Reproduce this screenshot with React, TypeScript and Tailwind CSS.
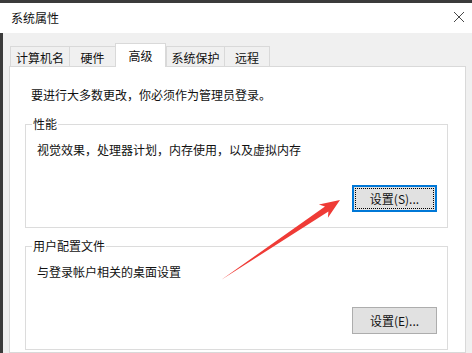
import { ReactNode } from "react";

const tabs = [
  { label: "计算机名", w: "w-[60px]" },
  { label: "硬件", w: "w-[47px]" },
  { label: "高级", w: "w-[51px]", active: true },
  { label: "系统保护", w: "w-[59px]" },
  { label: "远程", w: "w-[46px]" },
];

function Group({ title, children }: { title: string; children: ReactNode }) {
  return (
    <fieldset className="border border-[#dcdcdc]">
      <legend className="ml-[6px] px-[1px] text-[12px] leading-[16px]">{title}</legend>
      <div className="pl-[11px] pr-[10px] pt-[10px] pb-[15px]">{children}</div>
    </fieldset>
  );
}

function Button({ label, focused }: { label: string; focused?: boolean }) {
  return (
    <button
      className={
        focused
          ? "flex h-[27px] w-[85px] items-center justify-center border-2 border-[#0078d7] bg-[#e1e1e1] p-[1px]"
          : "flex h-[27px] w-[85px] items-center justify-center border border-[#adadad] bg-[#e1e1e1]"
      }
    >
      <span
        className={
          focused
            ? "flex h-full w-full items-center justify-center border border-dotted border-black text-[12px] leading-[16px]"
            : "text-[12px] leading-[16px]"
        }
      >
        {label}
      </span>
    </button>
  );
}

export default function App() {
  return (
    <div className="relative flex h-[353px] w-[472px] flex-col overflow-hidden bg-[#f0f0f0] font-['Noto_Sans_CJK_SC','Noto_Sans',sans-serif] text-[#111]">
      <div className="h-[3px] bg-[#3b3b3b]" />
      <div className="flex h-[30px] items-center justify-between bg-white pl-[11px] pr-[4px]">
        <span className="text-[12px] leading-[16px]">系统属性</span>
        <svg width="12" height="12" viewBox="0 0 12 12" className="mr-[3px] mb-[2px]">
          <path d="M1 1 L11 11 M11 1 L1 11" stroke="#333" strokeWidth="0.9" />
        </svg>
      </div>

      <div className="flex flex-1">
        <div className="w-[3px] bg-[#3b3b3b]" />
        <div className="flex flex-1 flex-col pl-[6px] pr-[6px] pt-[10px]">
          <div className="ml-[1px] flex h-[23px] items-end">
            {tabs.map((t) =>
              t.active ? (
                <div
                  key={t.label}
                  className={`${t.w} relative z-10 -mb-px flex h-[24px] items-center justify-center border border-b-0 border-[#d9d9d9] bg-white text-[12px] leading-[16px]`}
                >
                  {t.label}
                </div>
              ) : (
                <div
                  key={t.label}
                  className={`${t.w} -mr-px flex h-[20px] items-center justify-center border border-b-0 border-[#d9d9d9] pt-[2px] text-[12px] leading-[16px]`}
                >
                  {t.label}
                </div>
              )
            )}
          </div>

          <div className="flex-1 border border-[#d9d9d9] bg-white pl-[15px] pr-[17px] pt-[20px]">
            <p className="ml-[6px] text-[12px] leading-[16px]">要进行大多数更改，你必须作为管理员登录。</p>

            <div className="mt-[13px]">
              <Group title="性能">
                <p className="text-[12px] leading-[16px]">视觉效果，处理器计划，内存使用，以及虚拟内存</p>
                <div className="mt-[27px] flex justify-end">
                  <Button label="设置(S)..." focused />
                </div>
              </Group>
            </div>

            <div className="mt-[10px]">
              <Group title="用户配置文件">
                <p className="text-[12px] leading-[16px]">与登录帐户相关的桌面设置</p>
                <div className="mt-[27px] flex justify-end">
                  <Button label="设置(E)..." />
                </div>
              </Group>
            </div>
          </div>
        </div>
      </div>

      <svg className="pointer-events-none absolute left-0 top-0" width="472" height="353" viewBox="0 0 472 353">
        <polygon
          points="221,280 325,206.4 318.9,204.6 340,200 327.9,217.8 328.4,211.4"
          fill="#ef3b36"
        />
      </svg>
    </div>
  );
}
